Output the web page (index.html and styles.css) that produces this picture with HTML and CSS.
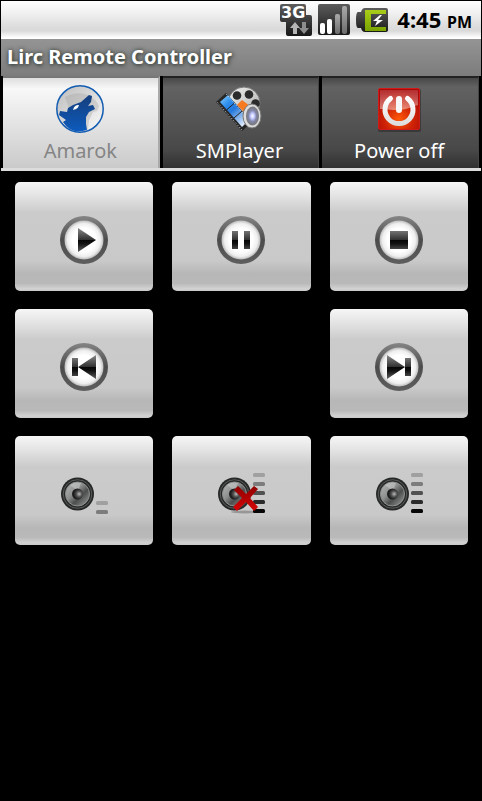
FILE: index.html
```
<!DOCTYPE html>
<html lang="en">
<head>
<meta charset="utf-8">
<title>Lirc Remote Controller</title>
<link rel="stylesheet" href="styles.css">
</head>
<body>
<svg class="defs" aria-hidden="true">
  <defs>
    <linearGradient id="ring" x1="0" y1="0" x2="0" y2="1"><stop offset="0" stop-color="#858585"/><stop offset=".5" stop-color="#4c4c4c"/><stop offset="1" stop-color="#5e5e5e"/></linearGradient>
    <radialGradient id="face"><stop offset=".6" stop-color="#fff"/><stop offset=".85" stop-color="#eee"/><stop offset="1" stop-color="#bbb"/></radialGradient>
    <linearGradient id="glyph" gradientUnits="userSpaceOnUse" x1="0" y1="12" x2="0" y2="36"><stop offset="0" stop-color="#8a8a8a"/><stop offset=".48" stop-color="#333"/><stop offset=".5" stop-color="#050505"/><stop offset=".65" stop-color="#111"/><stop offset="1" stop-color="#606060"/></linearGradient>
    <linearGradient id="cone" x1="0" y1="0" x2="1" y2="1"><stop offset="0" stop-color="#b8bab9"/><stop offset=".4" stop-color="#8d908f"/><stop offset=".62" stop-color="#4b4e4d"/><stop offset="1" stop-color="#a2a4a3"/></linearGradient>
    <radialGradient id="cap" cx=".65" cy=".5"><stop offset="0" stop-color="#bbb"/><stop offset=".5" stop-color="#555"/><stop offset="1" stop-color="#1c1c1c"/></radialGradient>
    <linearGradient id="wolf" x1="0" y1="0" x2="0" y2="1"><stop offset="0" stop-color="#153e7c"/><stop offset="1" stop-color="#0d5bbd"/></linearGradient>
    <linearGradient id="moon" x1="0" y1="0" x2="1" y2="1"><stop offset="0" stop-color="#bdbdbd"/><stop offset="1" stop-color="#fafafa"/></linearGradient>
    <linearGradient id="film" x1="0" y1="0" x2=".8" y2="1"><stop offset="0" stop-color="#8fd6ff"/><stop offset=".3" stop-color="#2b8cec"/><stop offset=".5" stop-color="#2478dc"/><stop offset="1" stop-color="#eef4fd"/></linearGradient>
    <linearGradient id="reel" x1="0" y1="0" x2="1" y2="1"><stop offset="0" stop-color="#f2f2f0"/><stop offset="1" stop-color="#aaa"/></linearGradient>
    <radialGradient id="lens"><stop offset="0" stop-color="#fff"/><stop offset=".3" stop-color="#c3c8ff"/><stop offset=".6" stop-color="#8186a8"/><stop offset="1" stop-color="#777"/></radialGradient>
    <radialGradient id="red" cx=".5" cy=".75" r=".7"><stop offset="0" stop-color="#ff5a08"/><stop offset=".5" stop-color="#cf2305"/><stop offset="1" stop-color="#a90909"/></radialGradient>
    <linearGradient id="gloss" x1="0" y1="0" x2="0" y2="1"><stop offset="0" stop-color="#fff" stop-opacity=".15"/><stop offset="1" stop-color="#fff" stop-opacity=".45"/></linearGradient>
    <linearGradient id="power" x1="0" y1="0" x2="0" y2="1"><stop offset="0" stop-color="#fff"/><stop offset="1" stop-color="#dedede"/></linearGradient>
    <linearGradient id="dark" x1="0" y1="0" x2="0" y2="1"><stop offset="0" stop-color="#5c5c5c"/><stop offset=".5" stop-color="#3b3b3b"/><stop offset="1" stop-color="#181818"/></linearGradient>
    <linearGradient id="green" x1="0" y1="0" x2="0" y2="1"><stop offset="0" stop-color="#a9cd18"/><stop offset="1" stop-color="#79a300"/></linearGradient>
    <linearGradient id="fade" x1="0" y1="0" x2="0" y2="1"><stop offset="0" stop-color="#aaa"/><stop offset="1" stop-color="#6c6c6c"/></linearGradient>
    <linearGradient id="cross" x1="0" y1="0" x2="0" y2="1"><stop offset="0" stop-color="#8f0000"/><stop offset="1" stop-color="#d80505"/></linearGradient>
    <g id="disc"><circle cx="24" cy="24" r="24" fill="url(#ring)"/><circle cx="24" cy="24" r="19.5" fill="url(#face)"/></g>
    <g id="speaker">
      <circle cx="17.500" cy="24" r="16.500" fill="#262827"/>
      <circle cx="17.500" cy="24" r="14.300" fill="none" stroke="#666968" stroke-width=".8"/>
      <circle cx="17.500" cy="24" r="12" fill="url(#cone)" stroke="#8d908f"/>
      <path d="M10 15a12 12 0 0 1 11-2l-3 8z" fill="#d0d2d1" opacity=".5"/>
      <circle cx="17.500" cy="24" r="5.500" fill="url(#cap)"/>
    </g>
    <g id="levels">
      <rect x="36" y="3" width="12" height="4" rx="1.500" fill="#a0a0a0"/>
      <rect x="36" y="12" width="12" height="4" rx="1.500" fill="#7c7c7c"/>
      <rect x="36" y="21" width="12" height="4" rx="1.500" fill="#515151"/>
      <rect x="36" y="30" width="12" height="4" rx="1.500" fill="#2b2b2b"/>
      <rect x="36" y="39" width="12" height="4" rx="1.500" fill="#060606"/>
    </g>
  </defs>
</svg>
<div class="screen">
  <header class="status">
    <svg class="status-icon" viewBox="0 0 32 32" role="img" aria-label="3G network">
      <path d="M2 0h22q2 0 2 2v9h4q2 0 2 2v17q0 2-2 2H8q-2 0-2-2V18H2q-2 0-2-2V2q0-2 2-2z" fill="url(#dark)"/>
      <text class="network" x="1" y="14">3G</text>
      <path d="M15 18l5 6h-3v6h-4v-6h-3z" fill="#b5b5b5"/><path d="M24 30l-5-6h3v-6h4v6h3z" fill="#8d8d8d"/>
    </svg>
    <svg class="status-icon" viewBox="0 0 32 32" role="img" aria-label="Signal strength">
      <rect width="32" height="31" rx="2" fill="url(#dark)"/>
      <rect x="2" y="19" width="5" height="11" rx="2" fill="#fff"/><rect x="9" y="15" width="5" height="15" rx="2" fill="#fff"/>
      <rect x="17" y="10" width="5" height="20" rx="2" fill="url(#fade)"/><rect x="24" y="2" width="5" height="28" rx="2" fill="url(#fade)"/>
    </svg>
    <svg class="status-icon" viewBox="0 0 32 32" role="img" aria-label="Battery charging">
      <path d="M9 4h21q2 0 2 2v20q0 2-2 2H9q-3 0-4-4H2q-2 0-2-8t2-8h3q1-4 4-4z" fill="url(#dark)"/>
      <path d="M9 6h21v4H15v13h15v4H9z" fill="url(#green)"/>
      <path d="M24 11l-7 6h4l-2 5 8-6h-5l4-5z" fill="#fff"/>
    </svg>
    <time class="clock">4:45 <span class="meridiem">PM</span></time>
  </header>
  <h1 class="title">Lirc Remote Controller</h1>
  <nav class="tabs">
    <button class="tab tab-active" type="button">
      <svg class="icon" viewBox="0 0 48 48" aria-hidden="true">
        <circle cx="24" cy="24" r="23.200" fill="url(#moon)" stroke="#125cb2" stroke-width="1.500"/>
        <path d="M9 12C20 6 36 6 43 21l-2 5-4 1-4 8-1 10L20 44z" fill="#999" opacity=".3"/>
        <path d="M3 30l1-4 7 1 1-4 5-3 8-3 8-7 3 1-1 6-3 4 5-1 2 4-6 3-3 5v7l1 6q-16 5-24-8l3-2z" fill="url(#wolf)"/>
        <path d="M17 25c1-4 3-5 6-5-1 3-2 4-6 5z" fill="#fff"/>
      </svg>
      <span>Amarok</span>
    </button>
    <button class="tab" type="button">
      <svg class="icon" viewBox="0 0 48 48" aria-hidden="true">
        <circle cx="29" cy="18" r="16" fill="url(#reel)" stroke="#777"/>
        <g fill="#2b2b2b"><circle cx="22" cy="10.500" r="4.300"/><circle cx="34" cy="9.500" r="4.300"/><circle cx="40.500" cy="18.500" r="4.300"/></g>
        <path d="M22 20l5-5 8 6-5 7z" fill="#f57a20"/><path d="M26 30l9-9 4 3-6 13z" fill="#343434"/>
        <path d="M1 17l10-9 26 29-10 9z" fill="#262626"/>
        <path d="M5 17l8-7 21 25-7 7z" fill="url(#film)"/>
        <path d="M11.500 25l8-7M19 33l8-7" stroke="#222"/>
        <path d="M2.500 17.500L27 45M11 9l25 28" stroke="#ddd" stroke-dasharray="1 2"/>
        <ellipse cx="37" cy="31" rx="9" ry="12" fill="#ddd" stroke="#777"/>
        <ellipse cx="37.500" cy="31" rx="6.500" ry="9.500" fill="url(#lens)"/>
      </svg>
      <span>SMPlayer</span>
    </button>
    <button class="tab" type="button">
      <svg class="icon" viewBox="0 0 48 48" aria-hidden="true">
        <rect x="3" y="4" width="43" height="43" rx="2" fill="#222" opacity=".5"/>
        <rect x="3.500" y="3.500" width="41" height="41" rx="1.500" fill="url(#red)" stroke="#d01b18"/>
        <path d="M5 5h38v15C36 22 32 25 21 25 13 25 9 24 5 24z" fill="url(#gloss)"/>
        <path d="M15.500 13.500a14 14 0 1 0 17 0" fill="none" stroke="url(#power)" stroke-width="5" stroke-linecap="round"/>
        <rect x="21" y="11" width="6" height="17" rx="3" fill="#f8f8f8"/>
      </svg>
      <span>Power off</span>
    </button>
  </nav>
  <main class="remote">
    <button class="key" type="button" aria-label="Play"><svg class="icon" viewBox="0 0 48 48"><use href="#disc"/><path d="M18 12l18 12-18 12z" fill="url(#glyph)"/></svg></button>
    <button class="key" type="button" aria-label="Pause"><svg class="icon" viewBox="0 0 48 48"><use href="#disc"/><path d="M15 15h6v18h-6zM27 15h6v18h-6z" fill="url(#glyph)"/></svg></button>
    <button class="key" type="button" aria-label="Stop"><svg class="icon" viewBox="0 0 48 48"><use href="#disc"/><path d="M15 15h18v18H15z" fill="url(#glyph)"/></svg></button>
    <button class="key" type="button" aria-label="Previous"><svg class="icon" viewBox="0 0 48 48"><use href="#disc"/><path d="M12 15h6v18h-6zM36 12v24L18 24z" fill="url(#glyph)"/></svg></button>
    <button class="key key-last" type="button" aria-label="Next"><svg class="icon" viewBox="0 0 48 48"><use href="#disc"/><path d="M12 12l18 12-18 12zM30 15h6v18h-6z" fill="url(#glyph)"/></svg></button>
    <button class="key" type="button" aria-label="Volume down"><svg class="icon" viewBox="0 0 48 48"><use href="#speaker"/><rect x="36" y="31" width="12" height="4" rx="1.500" fill="#a0a0a0"/><rect x="36" y="40" width="12" height="4" rx="1.500" fill="#7c7c7c"/></svg></button>
    <button class="key" type="button" aria-label="Mute"><svg class="icon" viewBox="0 0 48 48"><ellipse cx="28" cy="42" rx="14" ry="1.500" fill="#777" opacity=".6"/><use href="#speaker"/><use href="#levels"/><path d="M17 20l4-4 8 8 8-8 4 3-8 9 8 9-4 4-8-9-9 9-4-4 9-9z" fill="url(#cross)"/></svg></button>
    <button class="key" type="button" aria-label="Volume up"><svg class="icon" viewBox="0 0 48 48"><use href="#speaker"/><use href="#levels"/></svg></button>
  </main>
</div>
</body>
</html>
```
FILE: styles.css
```
* { box-sizing: border-box; }
body {
  margin: 0;
  background: #000;
  font-family: "Noto Sans", "Open Sans", sans-serif;
}
button {
  margin: 0;
  padding: 0;
  border: 0;
  font: inherit;
}
svg { display: block; }
.defs { position: absolute; width: 0; height: 0; }
.screen {
  min-height: 100vh;
  padding: 1px 1px 0;
}
.status {
  display: flex;
  align-items: center;
  justify-content: flex-end;
  gap: 6px;
  height: 38px;
  padding-right: 9px;
  background: linear-gradient(#fff 0%, #f4f4f4 25%, #dedede 65%, #d9d9d9 78%, #fff 97%);
}
.status-icon { width: 32px; height: 32px; }
.network { font: bold 16px "DejaVu Sans", sans-serif; fill: #fff; }
.clock {
  margin-left: 3px;
  color: #000;
  font-size: 22px;
  font-weight: 700;
  line-height: 38px;
  white-space: nowrap;
}
.meridiem { font-size: 16px; }
.title {
  height: 37px;
  margin: 0;
  padding-left: 6px;
  background: linear-gradient(#949494, #7c7c7c);
  color: #fff;
  font-size: 20px;
  font-weight: 700;
  line-height: 35px;
  text-shadow: 1px 1px 4px #333d37, 0 0 4px #4b554f;
}
.tabs {
  display: grid;
  grid-template-columns: repeat(3, 1fr);
  gap: 3px;
  padding: 0 2px;
  border-bottom: 3px solid #dcdcdc;
}
.tab {
  display: flex;
  flex-direction: column;
  align-items: center;
  height: 92px;
  padding: 7px 2px 0 0;
  border-top: 2px solid #222;
  border-right: 1px solid #444;
  background: linear-gradient(#484848, #626262 10%, #484848 80%, #303030);
  color: #fff;
  font-size: 20px;
  line-height: 36px;
}
.tab-active {
  padding-right: 0;
  border-top-color: #777;
  border-right: 2px solid #aaa;
  background: linear-gradient(#dedede, #f8f8f8 12%, #cacaca);
  color: #858585;
}
.icon { width: 48px; height: 48px; flex: none; }
.remote {
  display: grid;
  grid-template-columns: repeat(3, 1fr);
  gap: 18px 19px;
  padding: 11px 13px 18px 14px;
}
.key {
  display: flex;
  align-items: center;
  justify-content: center;
  height: 109px;
  padding-top: 6px;
  border-radius: 5px;
  background: linear-gradient(#f6f6f6 0%, #e3e3e3 13%, #cbcbcb 28%, #c9c9c9 72%, #b7b7b7 84%, #b9b9b9 93%, #d2d2d2 98%, #c9c9c9 100%);
}
.key-last { grid-column: 3; }
```
